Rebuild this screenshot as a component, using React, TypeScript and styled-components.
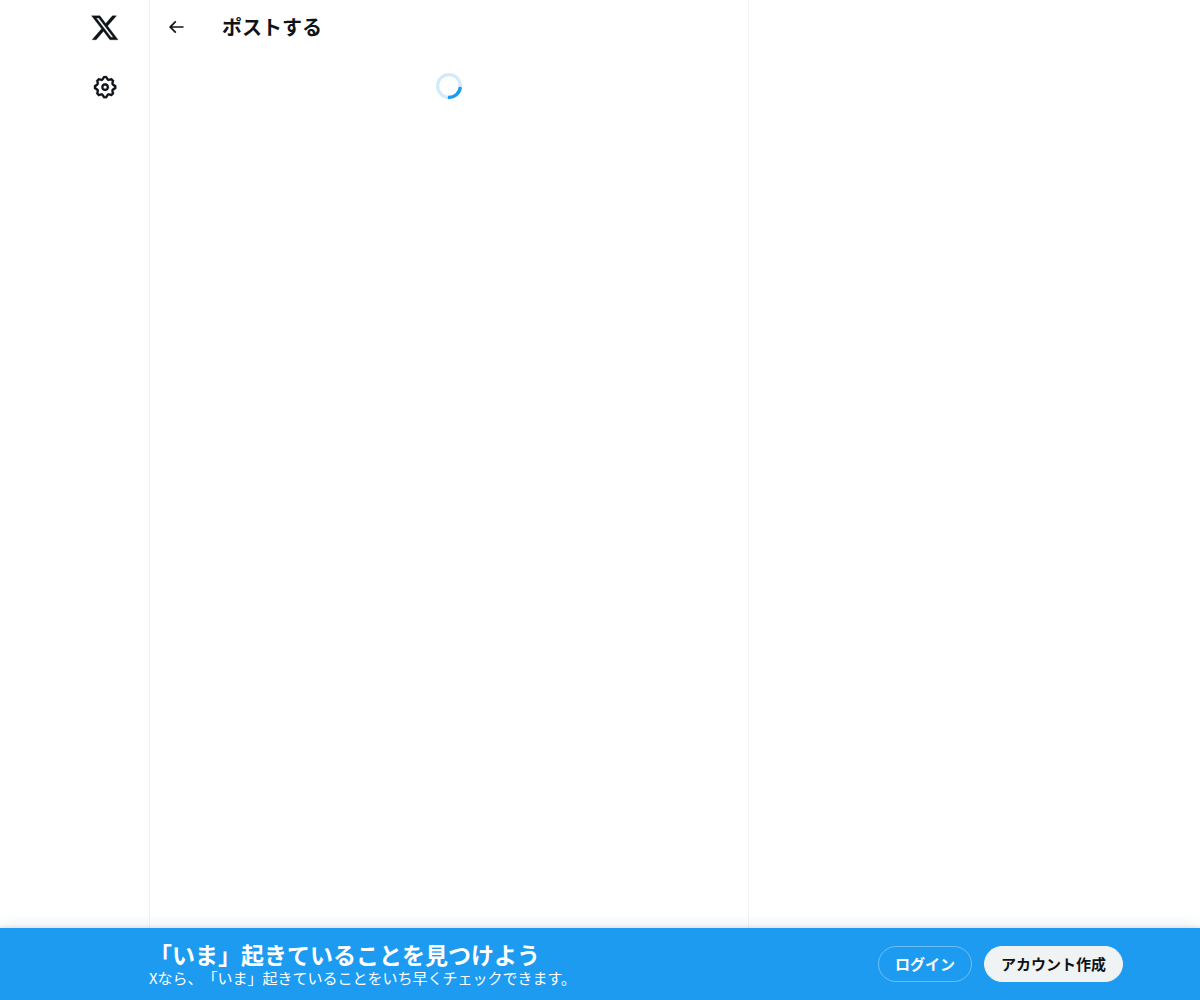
import React from 'react';
import styled, { createGlobalStyle } from 'styled-components';

const Global = createGlobalStyle`
  * { box-sizing: border-box; }
  body { margin: 0; background: #fff; overflow: hidden; color: #0f1419;
    font-family: "Noto Sans CJK JP", sans-serif; text-spacing-trim: space-all; }
`;
const Page = styled.div`display: flex; flex-direction: column; height: 100vh;`;
const Columns = styled.div`display: flex; flex: 1; min-height: 0;`;
const Nav = styled.nav`
  width: 149px; display: flex; flex-direction: column; align-items: flex-end;
  padding: 2px 18px 0 0; gap: 7px;
`;
const NavLink = styled.a`
  width: 52px; height: 52px; display: flex; align-items: center; justify-content: center;
`;
const Icon = styled.svg<{ $size: number; $weight?: number }>`
  width: ${p => p.$size}px; height: ${p => p.$size}px; fill: #0f1419; display: block; flex: none;
  stroke: #0f1419; stroke-width: ${p => p.$weight ?? 0}; stroke-linejoin: round;
`;
const Main = styled.main`
  width: 600px; border: solid #eff3f4; border-width: 0 1px;
  display: flex; flex-direction: column;
`;
const Header = styled.header`height: 53px; display: flex; align-items: center; padding: 0 16px;`;
const Back = styled.div`width: 56px; display: flex;`;
const Title = styled.h1`margin: 0; font-size: 20px; line-height: 24px; font-weight: 700;`;
const Loading = styled.div`display: flex; justify-content: center; padding-top: 20px;`;
const Spinner = styled.svg`width: 26px; height: 26px; fill: none; stroke: #1d9bf0; stroke-width: 4;`;
const Banner = styled.footer`
  height: 72px; background: #1d9bf0; color: #fff; display: flex; align-items: center;
  padding: 0 77px 0 149px; justify-content: space-between; z-index: 1;
  box-shadow: rgba(101,119,134,.2) 0 0 15px, rgba(101,119,134,.15) 0 0 3px 1px;
`;
const Pitch = styled.div`display: flex; flex-direction: column;`;
const Headline = styled.div`font-size: 23px; line-height: 28px; font-weight: 700;`;
const Sub = styled.div`font-size: 15px; line-height: 20px;`;
const Actions = styled.div`display: flex; gap: 12px;`;
const Button = styled.button<{ $filled?: boolean }>`
  height: 36px; padding: 0 16px; border-radius: 18px; font: inherit; font-size: 15px; font-weight: 700;
  line-height: 20px; white-space: nowrap;
  color: ${p => (p.$filled ? '#0f1419' : '#fff')};
  background: ${p => (p.$filled ? '#eff3f4' : 'transparent')};
  border: 1px solid ${p => (p.$filled ? '#eff3f4' : 'rgba(255,255,255,.35)')};
`;

export default function App() {
  return (
    <Page>
      <Global />
      <Columns>
        <Nav>
          <NavLink aria-label="X">
            <Icon $size={29.5} $weight={0.25} viewBox="0 0 24 24"><path d="M18.244 2.25h3.308l-7.227 8.26 8.502 11.24H16.17l-5.214-6.817L4.99 21.75H1.68l7.73-8.835L1.254 2.25H8.08l4.713 6.231zm-1.161 17.52h1.833L7.084 4.126H5.117z" /></Icon>
          </NavLink>
          <NavLink aria-label="設定">
            <Icon $size={26.25} $weight={0.2} viewBox="0 0 24 24"><path d="M10.54 1.75h2.92l1.57 2.36c.11.17.32.25.53.21l2.53-.59 2.17 2.17-.58 2.54c-.05.2.04.41.21.53l2.36 1.57v2.92l-2.36 1.57c-.17.12-.26.33-.21.53l.58 2.54-2.17 2.17-2.53-.59c-.21-.04-.42.04-.53.21l-1.57 2.36h-2.92l-1.58-2.36c-.11-.17-.32-.25-.52-.21l-2.54.59-2.17-2.17.58-2.54c.05-.2-.03-.41-.21-.53l-2.35-1.57v-2.92L4.1 8.97c.18-.12.26-.33.21-.53L3.73 5.9 5.9 3.73l2.54.59c.2.04.41-.04.52-.21l1.58-2.36zm1.07 2l-.98 1.47C10.05 6.08 9 6.5 7.99 6.27l-1.46-.34-.6.6.33 1.46c.24 1.01-.18 2.07-1.05 2.64l-1.46.98v.78l1.46.98c.87.57 1.29 1.63 1.05 2.64l-.33 1.46.6.6 1.46-.34c1.01-.23 2.06.19 2.64 1.05l.98 1.47h.78l.97-1.47c.58-.86 1.63-1.28 2.65-1.05l1.45.34.61-.6-.34-1.46c-.23-1.01.18-2.07 1.05-2.64l1.47-.98v-.78l-1.47-.98c-.87-.57-1.28-1.63-1.05-2.64l.34-1.46-.61-.6-1.45.34c-1.02.23-2.07-.19-2.65-1.05l-.97-1.47h-.78zM12 10.5c-.83 0-1.5.67-1.5 1.5s.67 1.5 1.5 1.5c.83 0 1.5-.67 1.5-1.5s-.67-1.5-1.5-1.5zM8.5 12c0-1.93 1.56-3.5 3.5-3.5 1.93 0 3.5 1.57 3.5 3.5s-1.57 3.5-3.5 3.5c-1.94 0-3.5-1.57-3.5-3.5z" /></Icon>
          </NavLink>
        </Nav>
        <Main>
          <Header>
            <Back><Icon $size={20} viewBox="0 0 24 24"><path d="M7.414 13l5.043 5.04-1.414 1.42L3.586 12l7.457-7.46 1.414 1.42L7.414 11H21v2H7.414z" /></Icon></Back>
            <Title>ポストする</Title>
          </Header>
          <Loading>
            <Spinner viewBox="0 0 32 32">
              <circle cx="16" cy="16" r="14" opacity=".2" />
              <circle cx="16" cy="16" r="14" strokeDasharray="22 66" transform="rotate(5 16 16)" />
            </Spinner>
          </Loading>
        </Main>
      </Columns>
      <Banner>
        <Pitch>
          <Headline>「いま」起きていることを見つけよう</Headline>
          <Sub>Xなら、「いま」起きていることをいち早くチェックできます。</Sub>
        </Pitch>
        <Actions>
          <Button>ログイン</Button>
          <Button $filled>アカウント作成</Button>
        </Actions>
      </Banner>
    </Page>
  );
}
